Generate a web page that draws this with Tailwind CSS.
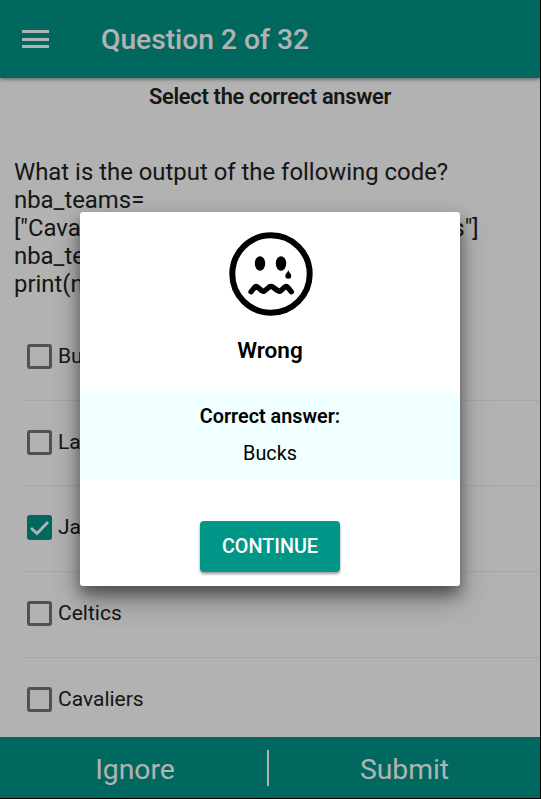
<!DOCTYPE html>
<html lang="en">
<head>
    <meta charset="UTF-8">
    <meta name="viewport" content="width=device-width, initial-scale=1.0">
    <title>Python Quiz</title>
    <script src="https://cdn.jsdelivr.net/npm/@tailwindcss/browser@4"></script>
</head>
<body class="bg-black overflow-hidden font-[Roboto,sans-serif]">
<div class="relative w-[540px] h-[798px] flex flex-col bg-white text-[#212121] overflow-hidden">
    <header class="relative h-[78px] shrink-0 flex items-center bg-[#009688] text-white shadow-[0_1px_4px_rgba(0,0,0,0.5)]">
        <button class="ml-[22px] w-[27px] flex flex-col gap-[4.5px]" aria-label="Menu">
            <span class="h-[3px] w-full bg-white"></span>
            <span class="h-[3px] w-full bg-white"></span>
            <span class="h-[3px] w-full bg-white"></span>
        </button>
        <h1 class="ml-[52px] pt-0.5 text-[28.2px] font-medium">Question 2 of 32</h1>
    </header>

    <main class="flex-1 min-h-0 flex flex-col">
        <h2 class="mt-[5px] h-7 shrink-0 text-center text-[21.8px] tracking-[-0.28px] leading-7 font-semibold">Select the correct answer</h2>
        <div class="mt-[47px] h-[157px] shrink-0 px-3.5 text-[23.9px] leading-7 whitespace-nowrap">
            <p>What is the output of the following code?</p>
            <p>nba_teams=</p>
            <p class="[word-spacing:1px]">["Cavaliers","Celtics","Lakers","Jazz", "Bucks"]</p>
            <p>nba_teams.sort()</p>
            <p>print(nba_teams[0])</p>
        </div>
        <div id="options" class="ml-6"></div>
    </main>

    <footer class="h-[61px] shrink-0 flex items-center bg-[#009688] text-white text-[28.3px] relative">
        <button class="w-[267px] pl-[3px] text-center pt-1.5">Ignore</button>
        <span class="w-0.5 h-9 bg-white"></span>
        <button class="flex-1 text-center pt-1.5">Submit</button>
    </footer>

    <div class="absolute inset-0 bg-black/30 flex">
        <div class="mt-[212px] ml-20 w-[380px] h-[374px] flex flex-col items-center rounded-[3px] bg-white text-black shadow-[0_14px_30px_rgba(0,0,0,0.3),0_8px_14px_rgba(0,0,0,0.4)]">
            <svg class="mt-5 ml-0.5 w-[84px] h-[84px] shrink-0" viewBox="0 0 84 84">
                <circle cx="42" cy="42" r="38.7" fill="none" stroke="#000" stroke-width="6"/>
                <ellipse cx="31" cy="31.5" rx="5.2" ry="7.3"/>
                <ellipse cx="52" cy="31.5" rx="5.2" ry="7.3"/>
                <path d="M59.300 38C58.800 40.500 56.300 41.500 56.300 44a3 2.800 0 0 0 6 0C62.300 41.500 59.800 40.500 59.300 38Z"/>
                <path d="M22 59.800L25.500 55.500Q26.800 54 28.500 55L32.500 58.500Q34.300 60 36 58.500L40.300 55Q42 53.800 43.700 55L48.500 58.500Q50.300 60 52 58.500L55.800 55Q57.500 54 58.900 55.500L62.400 59.800" fill="none" stroke="#000" stroke-width="5.300" stroke-linecap="round" stroke-linejoin="round"/>
            </svg>
            <h3 class="mt-[19px] text-[22.6px] leading-8 font-semibold">Wrong</h3>
            <div class="mt-[25px] h-[87px] w-full shrink-0 bg-[#f0ffff] text-center text-[19.8px] leading-[36.5px] pt-[7px]">
                <p class="font-semibold">Correct answer:</p>
                <p>Bucks</p>
            </div>
            <button class="mt-[42px] w-[140px] h-[51px] shrink-0 rounded bg-[#009688] text-white text-[19.8px] font-medium shadow-[0_2px_3px_rgba(0,0,0,0.4)]">CONTINUE</button>
        </div>
    </div>
</div>

<script>
    const options = [
        { name: 'Bucks', checked: false },
        { name: 'Lakers', checked: false },
        { name: 'Jazz', checked: true },
        { name: 'Celtics', checked: false },
        { name: 'Cavaliers', checked: false }
    ];

    document.getElementById('options').innerHTML = options.map((option, i) => `
        <div class="h-[85.7px] flex pt-[29px] ${i < 4 ? 'border-b border-[#f0f0f0]' : ''}">
            <span class="ml-[3px] mr-[6px] size-[25px] rounded-[3px] ${option.checked ? 'bg-[#009688]' : 'border-3 border-[#757575]'}">
                ${option.checked ? '<svg viewBox="0 0 25 25"><path d="M4 13l6 5.500L21 7" fill="none" stroke="#fff" stroke-width="2.900"/></svg>' : ''}
            </span>
            <span class="-mt-[3px] text-[21px] leading-[30px]">${option.name}</span>
        </div>
    `).join('');
</script>
</body>
</html>
